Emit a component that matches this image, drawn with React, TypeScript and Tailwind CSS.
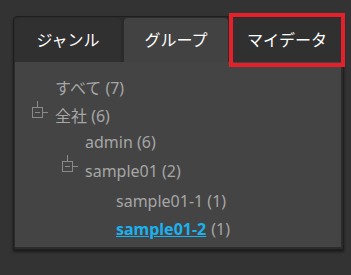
import React from "react";

function MinusIcon() {
  return (
    <svg width="16" height="18" viewBox="0 0 16 18" className="shrink-0 self-start" fill="none" stroke="#8a8a8a" strokeWidth="1">
      <line x1="5.5" y1="0" x2="5.5" y2="6" />
      <rect x="0.5" y="6.5" width="10" height="10" />
      <line x1="3" y1="11.5" x2="8" y2="11.5" />
      <line x1="10.5" y1="11.5" x2="16" y2="11.5" />
    </svg>
  );
}

export default function App() {
  const font = { fontFamily: '"Noto Sans", "Noto Sans CJK JP", sans-serif' };
  return (
    <div className="w-[351px] h-[275px] bg-[#333333] pt-[16px] pl-[13px] relative" style={font}>
      <div className="w-[331px] h-[234px] bg-[#2b2b2b] border border-[#1f1f1f] rounded-tl-[4px] shadow-[0_2px_3px_rgba(0,0,0,0.5)] flex flex-col">
        <div className="flex h-[45px] pt-[1px] pl-[1px] gap-[3px]">
          <div className="w-[106px] bg-[#303030] rounded-t-[4px] flex items-center justify-center text-white text-[16px]">
            ジャンル
          </div>
          <div className="w-[104px] bg-[#424242] rounded-t-[4px] flex items-center justify-center text-white text-[16px]">
            グループ
          </div>
          <div className="w-[112px] bg-[#303030] rounded-t-[4px] flex items-center justify-center text-white text-[16px]">
            マイデータ
          </div>
        </div>
        <div className="flex-1 bg-[#444444] mx-[1px] mr-[2px] mb-[2px] text-[16px] text-[#a6a6a6] pt-[12px] leading-[20px]">
          <div className="pl-[40px] h-[27px] flex items-center">すべて (7)</div>
          <div className="pl-[17px] flex items-start h-[27px] gap-[7px]">
            <MinusIcon />
            <span className="pt-[5px]">全社 (6)</span>
          </div>
          <div className="pl-[70px] h-[27px] flex items-center">admin (6)</div>
          <div className="pl-[47px] flex items-start h-[31px] gap-[7px]">
            <MinusIcon />
            <span className="pt-[6px]">sample01 (2)</span>
          </div>
          <div className="pl-[101px] h-[29px] flex items-center">sample01-1 (1)</div>
          <div className="pl-[101px] h-[27px] flex items-center">
            <span className="text-[#1ab2ee] font-bold underline">sample01-2</span>
            <span className="ml-[5px]">(1)</span>
          </div>
        </div>
      </div>
      <div className="absolute left-[229px] top-[13px] w-[116px] h-[54px] border-[4px] border-[#e5202a]" />
    </div>
  );
}
